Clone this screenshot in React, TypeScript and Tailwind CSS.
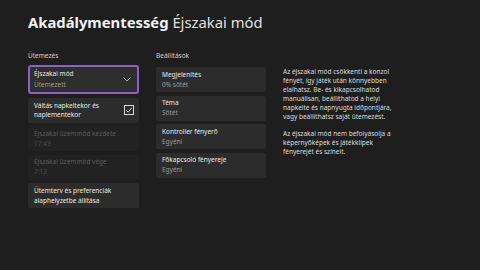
import React from "react";

const font = { fontFamily: '"Noto Sans", "Open Sans", sans-serif' };

function Card({ title, sub, disabled }: { title: string; sub?: string; disabled?: boolean }) {
  return (
    <div
      className={`h-[25px] rounded-[2px] px-[6px] flex flex-col justify-center leading-[10px] ${
        disabled ? "bg-[#222222]" : "bg-[#2c2c2c]"
      }`}
    >
      <span className={`text-[6.5px] ${disabled ? "text-[#5c5c5c]" : "text-[#e8e8e8]"}`}>{title}</span>
      {sub && (
        <span className={`text-[6.5px] ${disabled ? "text-[#4e4e4e]" : "text-[#9a9a9a]"}`}>{sub}</span>
      )}
    </div>
  );
}

export default function App() {
  return (
    <div className="w-[480px] h-[270px] bg-[#1e1e1e] text-white overflow-hidden pl-[28px] pt-[12px]" style={font}>
      {/* Header */}
      <h1 className="text-[14.8px] leading-[20px] text-[#f2f2f2]">
        <span className="font-bold">Akadálymentesség</span> <span className="text-[#e0e0e0]">Éjszakai mód</span>
      </h1>

      <div className="flex mt-[18px]">
        {/* Ütemezés */}
        <div className="w-[111px] flex flex-col">
          <div className="text-[6.5px] leading-[9px] text-[#cfcfcf] mb-[5px] mt-[1px]">Ütemezés</div>
          <div className="flex flex-col gap-[3.5px]">
            <div className="h-[29px] rounded-[3px] border-2 border-[#8c5fc9] bg-[#2e2e2e] pl-[4px] pr-[6px] flex items-center justify-between leading-[10.5px]">
              <div className="flex flex-col">
                <span className="text-[6.5px] text-[#e8e8e8]">Éjszakai mód</span>
                <span className="text-[6.5px] text-[#9a9a9a]">Ütemezett</span>
              </div>
              <svg width="8" height="5" viewBox="0 0 8 5" className="mb-[1px]">
                <path d="M0.5 0.5 L4 4 L7.5 0.5" fill="none" stroke="#bdbdbd" strokeWidth="0.9" />
              </svg>
            </div>
            <div className="h-[25px] rounded-[2px] bg-[#2c2c2c] pl-[6px] pr-[5px] flex items-center justify-between leading-[9.5px]">
              <span className="text-[6.5px] text-[#e8e8e8]">
                Váltás napkeltekor és
                <br />
                naplementekor
              </span>
              <svg width="10" height="10" viewBox="0 0 10 10">
                <rect x="0.5" y="0.5" width="9" height="9" fill="none" stroke="#d8d8d8" strokeWidth="1" />
                <path d="M2.3 5.3 L4.2 7.2 L7.8 2.8" fill="none" stroke="#e8e8e8" strokeWidth="0.9" />
              </svg>
            </div>
            <Card title="Éjszakai üzemmód kezdete" sub="17:43" disabled />
            <Card title="Éjszakai üzemmód vége" sub="7:13" disabled />
            <div className="h-[25px] rounded-[2px] bg-[#2c2c2c] px-[6px] flex items-center leading-[9.5px]">
              <span className="text-[6.5px] text-[#e8e8e8]">
                Ütemterv és preferenciák
                <br />
                alaphelyzetbe állítása
              </span>
            </div>
          </div>
        </div>

        {/* Beállítások */}
        <div className="w-[110px] ml-[17px] flex flex-col">
          <div className="text-[6.5px] leading-[9px] text-[#cfcfcf] mt-[1px]">Beállítások</div>
          <div className="flex flex-col gap-[3.5px] mt-[7px]">
            <Card title="Megjelenítés" sub="0% sötét" />
            <Card title="Téma" sub="Sötét" />
            <Card title="Kontroller fényerő" sub="Egyéni" />
            <Card title="Főkapcsoló fényereje" sub="Egyéni" />
          </div>
        </div>

        {/* Leírás */}
        <div className="ml-[17px] mt-[18px] text-[6.5px] leading-[8.9px] text-[#dcdcdc]">
          <p>
            Az éjszakai mód csökkenti a konzol
            <br />
            fényét, így játék után könnyebben
            <br />
            elalhatsz. Be- és kikapcsolhatod
            <br />
            manuálisan, beállíthatod a helyi
            <br />
            napkelte és napnyugta időpontjára,
            <br />
            vagy beállíthatsz saját ütemezést.
          </p>
          <p className="mt-[8.9px]">
            Az éjszakai mód nem befolyásolja a
            <br />
            képernyőképek és játékklipek
            <br />
            fényerejét és színeit.
          </p>
        </div>
      </div>
    </div>
  );
}
